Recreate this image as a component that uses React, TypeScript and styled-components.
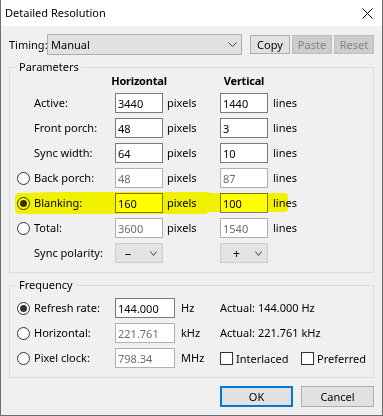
import React from "react";
import styled, { createGlobalStyle } from "styled-components";

const GlobalStyle = createGlobalStyle`
  html, body { margin: 0; padding: 0; }
  body {
    background: #f0f0f0;
    font-family: "Noto Sans", "Open Sans", sans-serif;
    font-size: 11px;
    color: #000;
  }
  * { box-sizing: border-box; }
`;

const Window = styled.div`
  position: relative;
  width: 383px;
  height: 416px;
  background: #f0f0f0;
  border: 1px solid #6e6e6e;
  border-top: none;
  display: flex;
  flex-direction: column;
`;

const TitleBar = styled.div`
  height: 26px;
  flex: none;
  background: #fff;
  display: flex;
  align-items: center;
  justify-content: space-between;
  padding: 0 9px 0 4px;
`;

const Title = styled.span`
  font-size: 11px;
  line-height: 16px;
`;

const Body = styled.div`
  display: flex;
  flex-direction: column;
  padding: 8px 8px 0 8px;
`;

const TimingRow = styled.div`
  display: flex;
  align-items: center;
  height: 21px;
`;

const TimingLabel = styled.span`
  width: 38px;
  line-height: 16px;
`;

const Combo = styled.div`
  width: 195px;
  height: 21px;
  border: 1px solid #adadad;
  background: #e1e1e1;
  display: flex;
  align-items: center;
  justify-content: space-between;
  padding: 0 4px 0 3px;
`;

const ToolButtons = styled.div`
  display: flex;
  gap: 2px;
  margin-left: 8px;
`;

const SmallButton = styled.div<{ $disabled?: boolean }>`
  width: 40px;
  height: 19px;
  display: flex;
  align-items: center;
  justify-content: center;
  border: 1px solid ${(p) => (p.$disabled ? "#bfbfbf" : "#adadad")};
  background: ${(p) => (p.$disabled ? "#cccccc" : "#e1e1e1")};
  color: ${(p) => (p.$disabled ? "#838383" : "#000")};
`;

const Group = styled.div<{ $top: number; $pt: number }>`
  position: relative;
  margin-top: ${(p) => p.$top}px;
  border: 1px solid #dcdcdc;
  padding: ${(p) => p.$pt}px 0 9px 7px;
`;

const Legend = styled.span`
  position: absolute;
  top: -9px;
  left: 7px;
  padding: 0 2px;
  line-height: 16px;
  background: #f0f0f0;
`;

const ParamGrid = styled.div`
  display: grid;
  grid-template-columns: 17px 81px 48px 57px 48px 1fr;
  grid-template-rows: 15px repeat(7, 20px);
  row-gap: 5px;
  align-items: center;
`;

const FreqGrid = styled.div`
  display: grid;
  grid-template-columns: 17px 81px 60px 45px 1fr;
  grid-auto-rows: 20px;
  row-gap: 5px;
  align-items: center;
`;

const Heading = styled.span`
  justify-self: center;
  font-weight: 700;
  white-space: nowrap;
  line-height: 15px;
  letter-spacing: -0.2px;
`;

const RadioCell = styled.span<{ $checked?: boolean }>`
  width: 13px;
  height: 13px;
  border-radius: 50%;
  border: 1px solid #333;
  background: #fff;
  display: flex;
  align-items: center;
  justify-content: center;
  &::after {
    content: "";
    display: ${(p) => (p.$checked ? "block" : "none")};
    width: 7px;
    height: 7px;
    border-radius: 50%;
    background: #333;
  }
`;

const Label = styled.span`
  white-space: nowrap;
  line-height: 16px;
`;

const Edit = styled.input<{ $dim?: boolean }>`
  width: 100%;
  height: 20px;
  margin: 0;
  border: 1px solid ${(p) => (p.$dim ? "#b0b0b0" : "#7a7a7a")};
  background: #fff;
  color: ${(p) => (p.$dim ? "#6d6d6d" : "#000")};
  font: inherit;
  padding: 0 2px;
  outline: none;
  border-radius: 0;
`;

const Unit = styled.span<{ $pad: number }>`
  padding-left: ${(p) => p.$pad}px;
  white-space: nowrap;
  line-height: 16px;
`;

const PolarityCombo = styled.div<{ $pad: number }>`
  width: 100%;
  height: 20px;
  border: 1px solid #cccccc;
  background: #e3e3e3;
  display: flex;
  align-items: center;
  justify-content: space-between;
  padding: 0 5px 0 ${(p) => p.$pad}px;
  font-size: 12px;
`;

const CheckRow = styled.div`
  display: flex;
  align-items: center;
`;

const CheckItem = styled.label<{ $w?: number }>`
  display: flex;
  align-items: center;
  gap: 3px;
  width: ${(p) => (p.$w ? `${p.$w}px` : "auto")};
  white-space: nowrap;
`;

const CheckBox = styled.span`
  width: 13px;
  height: 13px;
  border: 1px solid #333;
  background: #fff;
  flex: none;
`;

const Footer = styled.div`
  display: flex;
  justify-content: flex-end;
  gap: 8px;
  margin-top: 8px;
`;

const DialogButton = styled.div<{ $default?: boolean }>`
  width: 73px;
  height: 21px;
  display: flex;
  align-items: center;
  justify-content: center;
  background: #e1e1e1;
  border: ${(p) => (p.$default ? "2px solid #0078d7" : "1px solid #adadad")};
`;

const Highlight = styled.svg`
  position: absolute;
  top: 0;
  left: -1px;
  pointer-events: none;
  mix-blend-mode: multiply;
`;

const Chevron = ({ w = 9 }: { w?: number }) => (
  <svg width={w} height={5} viewBox={`0 0 ${w} 5`}>
    <polyline points={`0.5,0.5 ${w / 2},4.5 ${w - 0.5},0.5`} fill="none" stroke="#404040" strokeWidth="1" />
  </svg>
);

const CloseIcon = () => (
  <svg width={11} height={11} viewBox="0 0 11 11">
    <path d="M0.5 0.5 L10.5 10.5 M10.5 0.5 L0.5 10.5" stroke="#000" strokeWidth="1" />
  </svg>
);

type Row = {
  label: string;
  radio?: boolean;
  checked?: boolean;
  h: string;
  v: string;
  dim?: boolean;
};

const rows: Row[] = [
  { label: "Active:", h: "3440", v: "1440" },
  { label: "Front porch:", h: "48", v: "3" },
  { label: "Sync width:", h: "64", v: "10" },
  { label: "Back porch:", radio: true, h: "48", v: "87", dim: true },
  { label: "Blanking:", radio: true, checked: true, h: "160", v: "100" },
  { label: "Total:", radio: true, h: "3600", v: "1540", dim: true },
];

type FreqRow = { label: string; checked?: boolean; value: string; unit: string; dim?: boolean };

const freqRows: FreqRow[] = [
  { label: "Refresh rate:", checked: true, value: "144.000", unit: "Hz" },
  { label: "Horizontal:", value: "221.761", unit: "kHz", dim: true },
  { label: "Pixel clock:", value: "798.34", unit: "MHz", dim: true },
];

export default function App() {
  return (
    <>
      <GlobalStyle />
      <Window>
        <TitleBar>
          <Title>Detailed Resolution</Title>
          <CloseIcon />
        </TitleBar>
        <Body>
          <TimingRow>
            <TimingLabel>Timing:</TimingLabel>
            <Combo>
              <span>Manual</span>
              <Chevron />
            </Combo>
            <ToolButtons>
              <SmallButton>Copy</SmallButton>
              <SmallButton $disabled>Paste</SmallButton>
              <SmallButton $disabled>Reset</SmallButton>
            </ToolButtons>
          </TimingRow>

          <Group $top={12} $pt={5}>
            <Legend>Parameters</Legend>
            <ParamGrid>
              <span />
              <span />
              <Heading>Horizontal</Heading>
              <span />
              <Heading>Vertical</Heading>
              <span />
              {rows.map((r) => (
                <React.Fragment key={r.label}>
                  {r.radio ? <RadioCell $checked={r.checked} /> : <span />}
                  <Label>{r.label}</Label>
                  <Edit readOnly value={r.h} $dim={r.dim} />
                  <Unit $pad={4}>pixels</Unit>
                  <Edit readOnly value={r.v} $dim={r.dim} />
                  <Unit $pad={5}>lines</Unit>
                </React.Fragment>
              ))}
              <span />
              <Label>Sync polarity:</Label>
              <PolarityCombo $pad={9}>
                <span>–</span>
                <Chevron w={7} />
              </PolarityCombo>
              <span />
              <PolarityCombo $pad={12}>
                <span>+</span>
                <Chevron w={7} />
              </PolarityCombo>
              <span />
            </ParamGrid>
          </Group>

          <Group $top={12} $pt={12}>
            <Legend>Frequency</Legend>
            <FreqGrid>
              {freqRows.map((f, i) => (
                <React.Fragment key={f.label}>
                  <RadioCell $checked={f.checked} />
                  <Label>{f.label}</Label>
                  <Edit readOnly value={f.value} $dim={f.dim} />
                  <Unit $pad={6}>{f.unit}</Unit>
                  {i === 0 && <Unit $pad={0}>Actual: 144.000 Hz</Unit>}
                  {i === 1 && <Unit $pad={0}>Actual: 221.761 kHz</Unit>}
                  {i === 2 && (
                    <CheckRow>
                      <CheckItem $w={81}>
                        <CheckBox />
                        <span>Interlaced</span>
                      </CheckItem>
                      <CheckItem>
                        <CheckBox />
                        <span>Preferred</span>
                      </CheckItem>
                    </CheckRow>
                  )}
                </React.Fragment>
              ))}
            </FreqGrid>
          </Group>

          <Footer>
            <DialogButton $default>OK</DialogButton>
            <DialogButton>Cancel</DialogButton>
          </Footer>
        </Body>
        <Highlight width={383} height={416} viewBox="0 0 383 416">
          <path
            d="M15 198 Q15 193 20 193 L60 192 L205 192 L207 191.5 L210 193 L284 193 Q288 193 288 197 L288 209 Q288 212 284 212 L210 212 L207 213 L205 214 L20 214 Q15 214 15 209 Z"
            fill="#ffff00"
          />
        </Highlight>
      </Window>
    </>
  );
}
